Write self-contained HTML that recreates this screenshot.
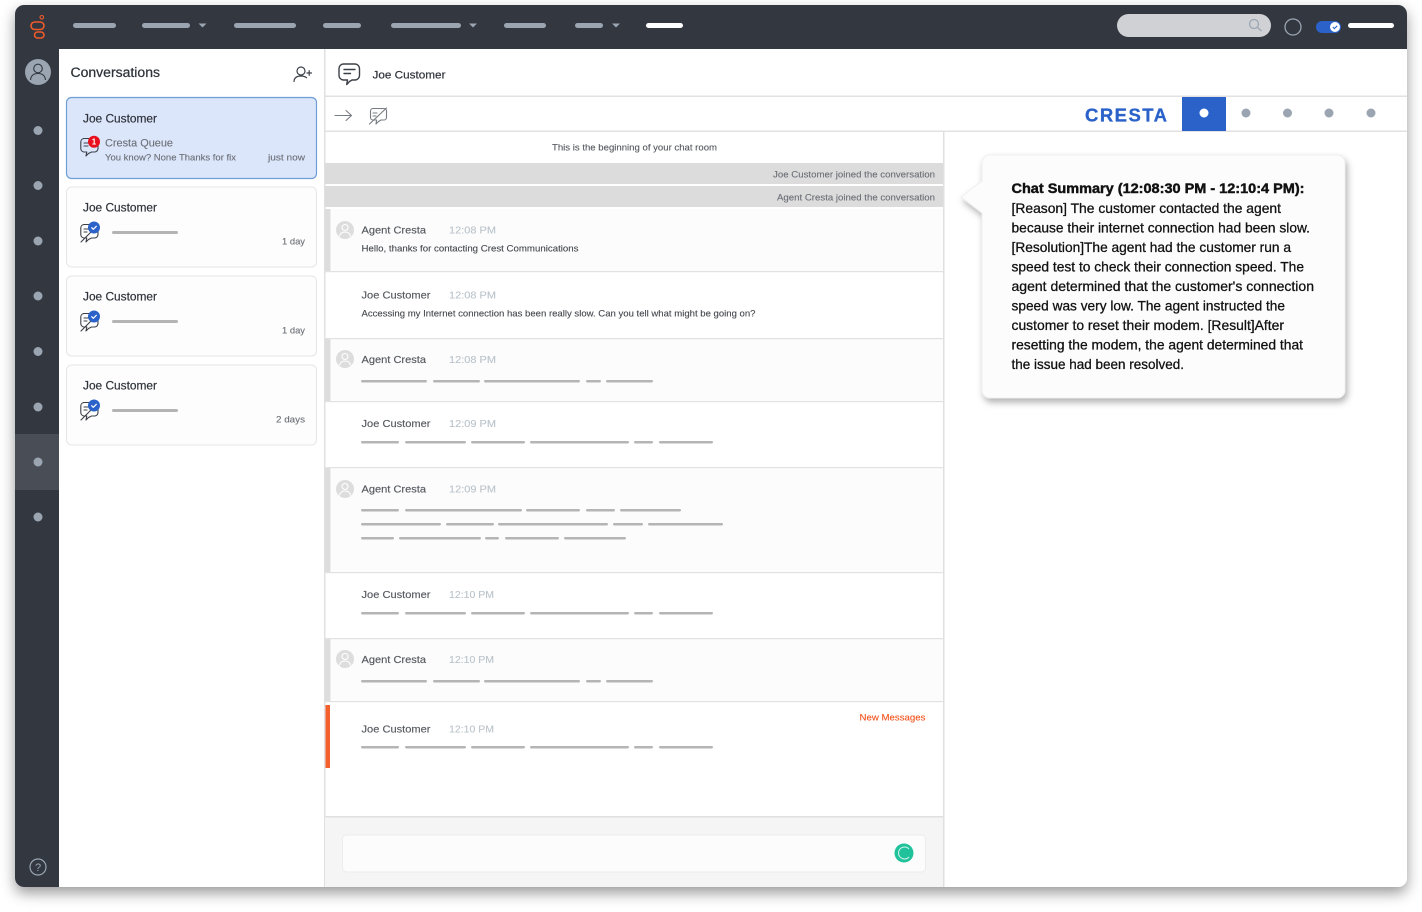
<!DOCTYPE html>
<html><head><meta charset="utf-8"><title>Conversations</title>
<style>
html,body{margin:0;padding:0;background:#fff;width:1422px;height:912px;overflow:hidden}
svg{display:block}
text{font-family:"Liberation Sans",sans-serif}
</style></head><body>
<svg width="1422" height="912" viewBox="0 0 1422 912" xmlns="http://www.w3.org/2000/svg">
<defs>
<filter id="fs" x="-5%" y="-5%" width="110%" height="112%"><feDropShadow dx="0" dy="6" stdDeviation="7" flood-color="#000" flood-opacity=".4"/></filter>
<filter id="cs" x="-15%" y="-15%" width="130%" height="135%"><feDropShadow dx="2" dy="4" stdDeviation="3.500" flood-color="#000" flood-opacity=".3"/></filter>
<g id="chatx" fill="none" stroke="#3b4048" stroke-width="1.100" stroke-linecap="round" stroke-linejoin="round">
<path d="M83.500 138.500h11a3.500 3.500 0 0 1 3.500 3.500v6.500a3.500 3.500 0 0 1-3.500 3.500h-3l-3 1.500-2.500 2.500 .8-4h-3a3.500 3.500 0 0 1-3-3.500V142a3.500 3.500 0 0 1 3-3.500z"/>
<path d="M84 143h6M84 146h4"/>
</g>
<g id="chatc" fill="none" stroke="#3b4048" stroke-width="1.100" stroke-linecap="round" stroke-linejoin="round">
<path d="M83.500 224.500h11a3.500 3.500 0 0 1 3.500 3.500v6.500a3.500 3.500 0 0 1-3.500 3.500h-3l-3 1.500-2.500 2.500 .8-4h-3a3.500 3.500 0 0 1-3-3.500V228a3.500 3.500 0 0 1 3-3.500z"/>
<path d="M84 229h5M84 232h3M81 242l10-10"/>
<circle cx="94" cy="227.500" r="6" fill="#2a62c9" stroke="none"/>
<path d="M91.700 227.700l1.600 1.600 3-3" stroke="#fff" stroke-width="1.200"/>
</g>
<g id="av"><circle cx="345" cy="230" r="9" fill="#dddddd"/><circle cx="345" cy="227.500" r="3" fill="none" stroke="#fff" stroke-width="1.100"/><path d="M339.500 236.500c.5-3.500 3-4.500 5.500-4.500s5 1 5.500 4.500" fill="none" stroke="#fff" stroke-width="1.100"/></g>
</defs>

<rect x="15" y="5" width="1392" height="882" rx="9" fill="#fff" filter="url(#fs)"/>
<path d="M15 887V14a9 9 0 0 1 9-9h1374a9 9 0 0 1 9 9v35H59v838H24a9 9 0 0 1-9-9z" fill="#33373f"/>
<rect x="15" y="434" width="44" height="56" fill="#494d55"/>

<!-- top nav -->
<g fill="#9aa5b1">
<rect x="73" y="23" width="43" height="5" rx="2.500"/>
<rect x="142" y="23" width="48" height="5" rx="2.500"/>
<rect x="234" y="23" width="62" height="5" rx="2.500"/>
<rect x="323" y="23" width="38" height="5" rx="2.500"/>
<rect x="391" y="23" width="70" height="5" rx="2.500"/>
<rect x="504" y="23" width="42" height="5" rx="2.500"/>
<rect x="575" y="23" width="28" height="5" rx="2.500"/>
<path d="M198.500 23.500h8l-4 4zM469 23.500h8l-4 4zM612 23.500h8l-4 4z"/>
</g>
<rect x="646" y="23" width="37" height="5" rx="2.500" fill="#fff"/>

<!-- logo -->
<g fill="none" stroke="#ef5a2b" stroke-width="1.600">
<circle cx="41.800" cy="17.300" r="1.800" stroke-width="1.100"/>
<rect x="31" y="22" width="13" height="7.500" rx="3.700"/>
<rect x="34.500" y="32" width="9.500" height="6" rx="3"/>
</g>

<!-- search etc -->
<rect x="1117" y="14" width="154" height="23" rx="11.500" fill="#cfd1d4"/>
<circle cx="1254" cy="24" r="4.500" fill="none" stroke="#9aa5b1" stroke-width="1.200"/>
<path d="M1257.500 27.500l4 3.500" stroke="#9aa5b1" stroke-width="1.200"/>
<circle cx="1293" cy="27" r="8" fill="none" stroke="#9aa5b1" stroke-width="1.300"/>
<rect x="1316" y="21" width="25" height="12" rx="6" fill="#2a62c9"/>
<circle cx="1335" cy="27" r="5" fill="#fff"/>
<path d="M1332.800 27l1.600 1.600 2.800-2.800" fill="none" stroke="#2a62c9" stroke-width="1.100"/>
<rect x="1348" y="23" width="46" height="5" rx="2.500" fill="#fff"/>

<!-- sidebar -->
<circle cx="38" cy="72" r="13" fill="#9aa5b1"/>
<circle cx="38" cy="68.500" r="4.300" fill="none" stroke="#33373f" stroke-width="1.100"/>
<path d="M30.500 80c.5-5 3.500-6.500 7.500-6.500s7 1.500 7.500 6.500" fill="none" stroke="#33373f" stroke-width="1.100"/>
<g fill="#9aa5b1">
<circle cx="38" cy="130.500" r="4.500"/><circle cx="38" cy="185.500" r="4.500"/><circle cx="38" cy="241" r="4.500"/><circle cx="38" cy="296" r="4.500"/><circle cx="38" cy="351.500" r="4.500"/><circle cx="38" cy="407" r="4.500"/><circle cx="38" cy="462" r="4.500"/><circle cx="38" cy="517" r="4.500"/>
</g>
<circle cx="38" cy="867" r="8" fill="none" stroke="#9aa5b1" stroke-width="1.200"/>
<text x="38" y="871" font-size="11" fill="#9aa5b1" text-anchor="middle">?</text>

<!-- conversation panel -->
<rect x="324" y="49" width="1.500" height="838" fill="#e0e0e0"/>
<text x="70.500" y="77" font-size="13.500" fill="#2f343b" stroke="#2f343b" stroke-width=".25" textLength="89.500" lengthAdjust="spacingAndGlyphs">Conversations</text>
<g fill="none" stroke="#3b4048" stroke-width="1.200" stroke-linecap="round">
<circle cx="301" cy="71" r="4"/>
<path d="M294 81.500c.3-4 3.200-5.500 7-5.500 2 0 4 .5 5.500 1.700M307 73h4.500M309.200 70.700v4.600"/>
</g>

<rect x="66.500" y="97.500" width="250" height="81" rx="5" fill="#dce6fb" stroke="#6f9ed6" stroke-width="1.200"/>
<text x="83" y="122.700" font-size="11.500" fill="#2f343b" stroke="#2f343b" stroke-width=".2" textLength="74" lengthAdjust="spacingAndGlyphs">Joe Customer</text>
<use href="#chatx"/>
<circle cx="94" cy="141.700" r="6" fill="#e8101e"/>
<text x="94" y="144.700" font-size="8" font-weight="bold" fill="#fff" text-anchor="middle">1</text>
<text x="105" y="146.500" font-size="11" fill="#6b6f76" stroke="#6b6f76" stroke-width=".12" textLength="68" lengthAdjust="spacingAndGlyphs">Cresta Queue</text>
<text x="105" y="160.300" font-size="9.500" fill="#6b6f76" stroke="#6b6f76" stroke-width=".12" textLength="131" lengthAdjust="spacingAndGlyphs">You know? None Thanks for fix</text>
<text x="268" y="160.300" font-size="9.500" fill="#6b6f76" stroke="#6b6f76" stroke-width=".12" textLength="37" lengthAdjust="spacingAndGlyphs">just now</text>

<g id="cards">
<rect x="66.500" y="187" width="250" height="80" rx="5" fill="#fdfdfd" stroke="#e6e6e6"/>
<rect x="66.500" y="276" width="250" height="80" rx="5" fill="#fdfdfd" stroke="#e6e6e6"/>
<rect x="66.500" y="365" width="250" height="80" rx="5" fill="#fdfdfd" stroke="#e6e6e6"/>
<text x="83" y="211.700" font-size="11.500" fill="#2f343b" stroke="#2f343b" stroke-width=".2" textLength="74" lengthAdjust="spacingAndGlyphs">Joe Customer</text>
<text x="83" y="300.700" font-size="11.500" fill="#2f343b" stroke="#2f343b" stroke-width=".2" textLength="74" lengthAdjust="spacingAndGlyphs">Joe Customer</text>
<text x="83" y="389.700" font-size="11.500" fill="#2f343b" stroke="#2f343b" stroke-width=".2" textLength="74" lengthAdjust="spacingAndGlyphs">Joe Customer</text>
<use href="#chatc"/><use href="#chatc" y="89"/><use href="#chatc" y="178"/>
<rect x="112" y="231" width="66" height="3" rx="1.500" fill="#b4b4b4"/>
<rect x="112" y="320" width="66" height="3" rx="1.500" fill="#b4b4b4"/>
<rect x="112" y="409" width="66" height="3" rx="1.500" fill="#b4b4b4"/>
<text x="282" y="244.700" font-size="9.500" fill="#6b6f76" stroke="#6b6f76" stroke-width=".12" textLength="23" lengthAdjust="spacingAndGlyphs">1 day</text>
<text x="282" y="333.700" font-size="9.500" fill="#6b6f76" stroke="#6b6f76" stroke-width=".12" textLength="23" lengthAdjust="spacingAndGlyphs">1 day</text>
<text x="276" y="422.700" font-size="9.500" fill="#6b6f76" stroke="#6b6f76" stroke-width=".12" textLength="29" lengthAdjust="spacingAndGlyphs">2 days</text>
</g>

<!-- chat header -->
<g fill="none" stroke="#3b4048" stroke-width="1.400" stroke-linecap="round" stroke-linejoin="round">
<path d="M343.500 64h11.500a4.500 4.500 0 0 1 4.500 4.500v7a4.500 4.500 0 0 1-4.500 4.500h-3l-2.500 1.500-2.800 3 .8-4.500h-4a4.500 4.500 0 0 1-4.500-4.500v-7a4.500 4.500 0 0 1 4.500-4.500z"/>
<path d="M344 69.500h11M344 73.500h6.500"/>
</g>
<text x="372.500" y="78.300" font-size="11" fill="#2f343b" stroke="#2f343b" stroke-width=".2" textLength="73" lengthAdjust="spacingAndGlyphs">Joe Customer</text>
<rect x="325" y="95.500" width="1082" height="1.500" fill="#e2e2e2"/>
<rect x="325" y="130.500" width="1082" height="1.500" fill="#e2e2e2"/>
<g fill="none" stroke="#777c83" stroke-width="1.100" stroke-linecap="round" stroke-linejoin="round">
<path d="M335 115.500h16M346 110.500l5.500 5-5.500 5"/>
<path d="M373 108.500h11a2.500 2.500 0 0 1 2.500 2.500v6.500a2.500 2.500 0 0 1-2.500 2.500h-3l-2.500 1.500-2.500 2.500 .6-4H373a2.500 2.500 0 0 1-2.500-2.500V111a2.500 2.500 0 0 1 2.500-2.500z"/>
<path d="M373 113h4M373 116h3M369.500 124l17-16"/>
</g>
<text x="1085" y="121.700" font-size="18.500" font-weight="bold" fill="#2a62c9" stroke="#2a62c9" stroke-width=".3" textLength="82" lengthAdjust="spacing">CRESTA</text>
<rect x="1182" y="97" width="44" height="34" fill="#2a62c9"/>
<circle cx="1204" cy="113" r="4.500" fill="#fff"/>
<g fill="#9aa5b1"><circle cx="1246" cy="113" r="4.500"/><circle cx="1287.500" cy="113" r="4.500"/><circle cx="1329" cy="113" r="4.500"/><circle cx="1371" cy="113" r="4.500"/></g>

<!-- chat body -->
<rect x="943" y="132" width="1.500" height="755" fill="#e0e0e0"/>
<text x="552" y="150.300" font-size="9.500" fill="#55595f" stroke="#55595f" stroke-width=".12" textLength="165" lengthAdjust="spacingAndGlyphs">This is the beginning of your chat room</text>
<rect x="325" y="163" width="618" height="21" fill="#dcdcdc"/>
<rect x="325" y="186" width="618" height="21" fill="#dcdcdc"/>
<text x="773" y="177.300" font-size="9.500" fill="#6b6f76" stroke="#6b6f76" stroke-width=".12" textLength="162" lengthAdjust="spacingAndGlyphs">Joe Customer joined the conversation</text>
<text x="777" y="200.300" font-size="9.500" fill="#6b6f76" stroke="#6b6f76" stroke-width=".12" textLength="158" lengthAdjust="spacingAndGlyphs">Agent Cresta joined the conversation</text>

<!-- row backgrounds -->
<g fill="#fcfcfc">
<rect x="331" y="209" width="612" height="62"/>
<rect x="331" y="339" width="612" height="62"/>
<rect x="331" y="468" width="612" height="104"/>
<rect x="331" y="639" width="612" height="62"/>
</g>
<g fill="#dddddd">
<rect x="325" y="209" width="5.500" height="62"/>
<rect x="325" y="339" width="5.500" height="62"/>
<rect x="325" y="468" width="5.500" height="104"/>
<rect x="325" y="639" width="5.500" height="62"/>
</g>
<g fill="#e2e2e2">
<rect x="325" y="271" width="618" height="1.200"/>
<rect x="325" y="338" width="618" height="1.200"/>
<rect x="325" y="401" width="618" height="1.200"/>
<rect x="325" y="467" width="618" height="1.200"/>
<rect x="325" y="572" width="618" height="1.200"/>
<rect x="325" y="638" width="618" height="1.200"/>
<rect x="325" y="701" width="618" height="1.200"/>
</g>
<rect x="325.500" y="705" width="4.500" height="63" fill="#f4612c"/>

<use href="#av"/><use href="#av" y="129"/><use href="#av" y="259"/><use href="#av" y="429"/>

<g font-size="10.500" fill="#55595f" stroke="#55595f" stroke-width=".15">
<text x="361.500" y="233.500" textLength="64.500" lengthAdjust="spacingAndGlyphs">Agent Cresta</text>
<text x="361.500" y="298.500" textLength="69" lengthAdjust="spacingAndGlyphs">Joe Customer</text>
<text x="361.500" y="362.800" textLength="64.500" lengthAdjust="spacingAndGlyphs">Agent Cresta</text>
<text x="361.500" y="427" textLength="69" lengthAdjust="spacingAndGlyphs">Joe Customer</text>
<text x="361.500" y="492.500" textLength="64.500" lengthAdjust="spacingAndGlyphs">Agent Cresta</text>
<text x="361.500" y="598" textLength="69" lengthAdjust="spacingAndGlyphs">Joe Customer</text>
<text x="361.500" y="662.800" textLength="64.500" lengthAdjust="spacingAndGlyphs">Agent Cresta</text>
<text x="361.500" y="732.700" textLength="69" lengthAdjust="spacingAndGlyphs">Joe Customer</text>
</g>
<g font-size="10.500" fill="#b9c3ca" stroke="#b9c3ca" stroke-width=".1">
<text x="449" y="233.500" textLength="47" lengthAdjust="spacingAndGlyphs">12:08 PM</text>
<text x="449" y="298.500" textLength="47" lengthAdjust="spacingAndGlyphs">12:08 PM</text>
<text x="449" y="362.800" textLength="47" lengthAdjust="spacingAndGlyphs">12:08 PM</text>
<text x="449" y="427" textLength="47" lengthAdjust="spacingAndGlyphs">12:09 PM</text>
<text x="449" y="492.500" textLength="47" lengthAdjust="spacingAndGlyphs">12:09 PM</text>
<text x="449" y="598" textLength="45" lengthAdjust="spacingAndGlyphs">12:10 PM</text>
<text x="449" y="662.800" textLength="45" lengthAdjust="spacingAndGlyphs">12:10 PM</text>
<text x="449" y="732.700" textLength="45" lengthAdjust="spacingAndGlyphs">12:10 PM</text>
</g>
<text x="361.500" y="251.300" font-size="9.500" fill="#44484e" stroke="#44484e" stroke-width=".12" textLength="217" lengthAdjust="spacingAndGlyphs">Hello, thanks for contacting Crest Communications</text>
<text x="361.500" y="316.300" font-size="9.500" fill="#44484e" stroke="#44484e" stroke-width=".12" textLength="394" lengthAdjust="spacingAndGlyphs">Accessing my Internet connection has been really slow. Can you tell what might be going on?</text>
<text x="859.500" y="720.300" font-size="9.500" fill="#f2551f" stroke="#f2551f" stroke-width=".12" textLength="66" lengthAdjust="spacingAndGlyphs">New Messages</text>

<!-- placeholder bars -->
<g fill="#b5b5b5">
<rect x="361" y="380" width="66" height="2.500" rx="1.200"/><rect x="433" y="380" width="47" height="2.500" rx="1.200"/><rect x="484" y="380" width="96" height="2.500" rx="1.200"/><rect x="586" y="380" width="15" height="2.500" rx="1.200"/><rect x="606" y="380" width="47" height="2.500" rx="1.200"/>
<rect x="361" y="680" width="66" height="2.500" rx="1.200"/><rect x="433" y="680" width="47" height="2.500" rx="1.200"/><rect x="484" y="680" width="96" height="2.500" rx="1.200"/><rect x="586" y="680" width="15" height="2.500" rx="1.200"/><rect x="606" y="680" width="47" height="2.500" rx="1.200"/>

<rect x="361" y="441" width="38" height="2.500" rx="1.200"/><rect x="405" y="441" width="61" height="2.500" rx="1.200"/><rect x="471" y="441" width="54" height="2.500" rx="1.200"/><rect x="530" y="441" width="99" height="2.500" rx="1.200"/><rect x="634" y="441" width="19" height="2.500" rx="1.200"/><rect x="659" y="441" width="54" height="2.500" rx="1.200"/>
<rect x="361" y="612" width="38" height="2.500" rx="1.200"/><rect x="405" y="612" width="61" height="2.500" rx="1.200"/><rect x="471" y="612" width="54" height="2.500" rx="1.200"/><rect x="530" y="612" width="99" height="2.500" rx="1.200"/><rect x="634" y="612" width="19" height="2.500" rx="1.200"/><rect x="659" y="612" width="54" height="2.500" rx="1.200"/>
<rect x="361" y="746" width="38" height="2.500" rx="1.200"/><rect x="405" y="746" width="61" height="2.500" rx="1.200"/><rect x="471" y="746" width="54" height="2.500" rx="1.200"/><rect x="530" y="746" width="99" height="2.500" rx="1.200"/><rect x="634" y="746" width="19" height="2.500" rx="1.200"/><rect x="659" y="746" width="54" height="2.500" rx="1.200"/>

<rect x="361" y="509" width="38" height="2.500" rx="1.200"/><rect x="405" y="509" width="117" height="2.500" rx="1.200"/><rect x="526" y="509" width="54" height="2.500" rx="1.200"/><rect x="586" y="509" width="29" height="2.500" rx="1.200"/><rect x="620" y="509" width="61" height="2.500" rx="1.200"/>
<rect x="361" y="523" width="80" height="2.500" rx="1.200"/><rect x="446" y="523" width="48" height="2.500" rx="1.200"/><rect x="498" y="523" width="110" height="2.500" rx="1.200"/><rect x="613" y="523" width="30" height="2.500" rx="1.200"/><rect x="648" y="523" width="75" height="2.500" rx="1.200"/>
<rect x="361" y="537" width="33" height="2.500" rx="1.200"/><rect x="399" y="537" width="82" height="2.500" rx="1.200"/><rect x="485" y="537" width="14" height="2.500" rx="1.200"/><rect x="505" y="537" width="54" height="2.500" rx="1.200"/><rect x="564" y="537" width="62" height="2.500" rx="1.200"/>
</g>

<!-- composer -->
<rect x="325" y="816" width="618" height="71" fill="#f5f5f5"/>
<rect x="325" y="816" width="618" height="1.500" fill="#e0e0e0"/>
<rect x="342.500" y="835" width="583" height="37" rx="4" fill="#fcfcfc" stroke="#ececec"/>
<circle cx="904" cy="853" r="9.500" fill="#1fc29b"/>
<path d="M909 849a6 6 0 1 0 0 8" fill="none" stroke="#d8f5ec" stroke-width="1"/>

<!-- summary callout -->
<path d="M990 155h347a8 8 0 0 1 8 8v227a8 8 0 0 1-8 8H990a8 8 0 0 1-8-8V213l-21-16 21-16v-18a8 8 0 0 1 8-8z" fill="#fcfcfc" stroke="#efefef" filter="url(#cs)"/>
<g font-size="14" fill="#111" stroke="#111" stroke-width=".28">
<text x="1011.500" y="193" font-weight="bold" stroke-width=".45" textLength="293" lengthAdjust="spacingAndGlyphs">Chat Summary (12:08:30 PM - 12:10:4 PM):</text>
<text x="1011.500" y="213" textLength="269.500" lengthAdjust="spacingAndGlyphs">[Reason] The customer contacted the agent</text>
<text x="1011.500" y="232.400" textLength="298.500" lengthAdjust="spacingAndGlyphs">because their internet connection had been slow.</text>
<text x="1011.500" y="252" textLength="279.500" lengthAdjust="spacingAndGlyphs">[Resolution]The agent had the customer run a</text>
<text x="1011.500" y="271.400" textLength="292.500" lengthAdjust="spacingAndGlyphs">speed test to check their connection speed. The</text>
<text x="1011.500" y="291" textLength="302.500" lengthAdjust="spacingAndGlyphs">agent determined that the customer's connection</text>
<text x="1011.500" y="310.400" textLength="273.500" lengthAdjust="spacingAndGlyphs">speed was very low. The agent instructed the</text>
<text x="1011.500" y="330" textLength="272.500" lengthAdjust="spacingAndGlyphs">customer to reset their modem. [Result]After</text>
<text x="1011.500" y="349.400" textLength="291.500" lengthAdjust="spacingAndGlyphs">resetting the modem, the agent determined that</text>
<text x="1011.500" y="369" textLength="172.500" lengthAdjust="spacingAndGlyphs">the issue had been resolved.</text>
</g>
</svg>
</body></html>
